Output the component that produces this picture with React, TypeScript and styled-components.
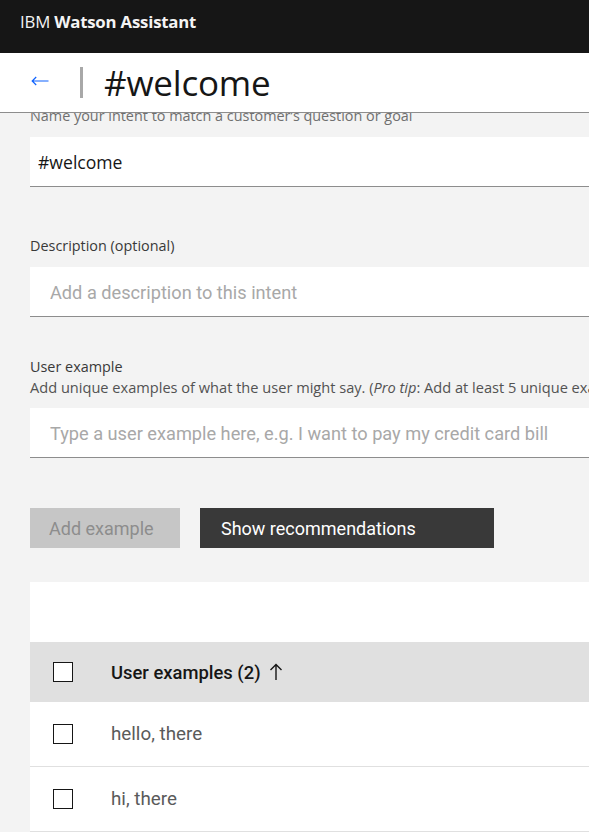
import { useLayoutEffect, useRef } from "react";
import styled, { createGlobalStyle } from "styled-components";

const GlobalStyle = createGlobalStyle`
  html, body {
    margin: 0;
    padding: 0;
    height: 100%;
    overflow: hidden;
    background: #f3f3f3;
  }
  body {
    font-family: "Open Sans", "Noto Sans", sans-serif;
    color: #161616;
  }
  * { box-sizing: border-box; }
`;

const Shell = styled.div`
  display: flex;
  flex-direction: column;
  height: 100vh;
`;

const TopBar = styled.header`
  height: 53px;
  flex-shrink: 0;
  background: #161616;
  color: #f4f4f4;
  padding: 11px 0 0 20px;
  font-size: 16.8px;
  line-height: 22px;
  letter-spacing: -0.2px;
  b { font-weight: 700; }
`;

const TitleBar = styled.div`
  height: 60px;
  flex-shrink: 0;
  background: #fff;
  border-bottom: 1px solid #8d8d8d;
  display: flex;
  align-items: center;
  padding-left: 31px;
`;

const BackButton = styled.button`
  border: 0;
  background: none;
  padding: 0;
  width: 18px;
  height: 20px;
  display: flex;
  align-items: center;
  color: #0f62fe;
  margin-top: -4px;
`;

const Divider = styled.span`
  width: 3px;
  height: 31px;
  background: #a8a8a8;
  margin: 0 21px 0 31px;
`;

const Title = styled.h1`
  margin: 0;
  font-weight: 400;
  font-size: 35px;
  letter-spacing: -0.2px;
  color: #161616;
`;

const Scroller = styled.main`
  flex: 1;
  min-height: 0;
  overflow: hidden;
`;

const Content = styled.div`
  padding: 40px 0 40px 30px;
  width: 900px;
`;

const Field = styled.div<{ $gap: number }>`
  display: flex;
  flex-direction: column;
  margin-bottom: ${(p) => p.$gap}px;
`;

const Label = styled.label<{ $muted?: boolean }>`
  font-size: 14.4px;
  line-height: 20px;
  color: ${(p) => (p.$muted ? "#6f6f6f" : "#393939")};
`;

const Helper = styled.div`
  font-size: 14.6px;
  line-height: 20px;
  color: #525252;
  white-space: nowrap;
`;

const Input = styled.input<{ $inset?: boolean }>`
  margin-top: 11px;
  height: 50px;
  border: 0;
  border-bottom: 1px solid #8d8d8d;
  background: #fff;
  padding: 0 0 0 ${(p) => (p.$inset ? "20px" : "8px")};
  font-family: "Open Sans", "Noto Sans", sans-serif;
  font-size: 17.6px;
  color: #161616;
  outline: none;
  &::placeholder {
    font-family: Roboto, sans-serif;
    font-size: 18.2px;
    color: #a8a8a8;
  }
`;

const Actions = styled.div`
  display: flex;
  gap: 20px;
  margin-bottom: 34px;
`;

const Button = styled.button<{ $primary?: boolean; $width: number }>`
  height: 40px;
  width: ${(p) => p.$width}px;
  border: 0;
  text-align: left;
  padding-left: ${(p) => (p.$primary ? "21px" : "19px")};
  font-family: Roboto, sans-serif;
  font-size: 18px;
  background: ${(p) => (p.$primary ? "#393939" : "#c6c6c6")};
  color: ${(p) => (p.$primary ? "#ffffff" : "#8d8d8d")};
`;

const Table = styled.section`
  background: #fff;
`;

const Toolbar = styled.div`
  height: 60px;
`;

const Row = styled.div<{ $head?: boolean }>`
  display: grid;
  grid-template-columns: 81px 1fr;
  align-items: center;
  height: ${(p) => (p.$head ? "60px" : "65px")};
  background: ${(p) => (p.$head ? "#e0e0e0" : "#fff")};
  border-bottom: ${(p) => (p.$head ? "0" : "1px solid #e0e0e0")};
  font-family: Roboto, sans-serif;
  font-size: ${(p) => (p.$head ? "18.4px" : "18.8px")};
  color: ${(p) => (p.$head ? "#161616" : "#5a5a5a")};
  font-weight: ${(p) => (p.$head ? 500 : 400)};
`;

const Check = styled.span`
  width: 20px;
  height: 20px;
  margin-left: 23px;
  border: 1px solid #161616;
  background: #fff;
`;

const HeadCell = styled.span`
  display: flex;
  align-items: center;
  gap: 8px;
`;

export default function App() {
  const scroller = useRef<HTMLElement>(null);
  useLayoutEffect(() => {
    if (scroller.current) scroller.current.scrollTop = 67;
  }, []);

  return (
    <Shell>
      <GlobalStyle />
      <TopBar>
        IBM <b>Watson Assistant</b>
      </TopBar>
      <TitleBar>
        <BackButton aria-label="Back">
          <svg width="18" height="10" viewBox="0 0 18 10" fill="none">
            <path d="M17.5 5H1.2M5.2 1L1.2 5l4 4" stroke="currentColor" strokeWidth="1.2" />
          </svg>
        </BackButton>
        <Divider />
        <Title>#welcome</Title>
      </TitleBar>
      <Scroller ref={scroller}>
        <Content>
          <Field $gap={49}>
            <Label $muted>Intent name</Label>
            <Label $muted>Name your intent to match a customer’s question or goal</Label>
            <Input defaultValue="#welcome" />
          </Field>
          <Field $gap={40}>
            <Label>Description (optional)</Label>
            <Input $inset placeholder="Add a description to this intent" />
          </Field>
          <Field $gap={50}>
            <Label>User example</Label>
            <Helper>
              Add unique examples of what the user might say. (<i>Pro tip</i>: Add at least 5 unique examples to help Watson understand)
            </Helper>
            <Input $inset placeholder="Type a user example here, e.g. I want to pay my credit card bill" />
          </Field>
          <Actions>
            <Button $width={150} disabled>Add example</Button>
            <Button $width={294} $primary>Show recommendations</Button>
          </Actions>
          <Table>
            <Toolbar />
            <Row $head>
              <Check />
              <HeadCell>
                User examples (2)
                <svg width="14" height="18" viewBox="0 0 14 18" fill="none">
                  <path d="M7 17V1.5M1.5 7L7 1.5 12.5 7" stroke="#161616" strokeWidth="1.4" />
                </svg>
              </HeadCell>
            </Row>
            <Row>
              <Check />
              <span>hello, there</span>
            </Row>
            <Row>
              <Check />
              <span>hi, there</span>
            </Row>
          </Table>
        </Content>
      </Scroller>
    </Shell>
  );
}
